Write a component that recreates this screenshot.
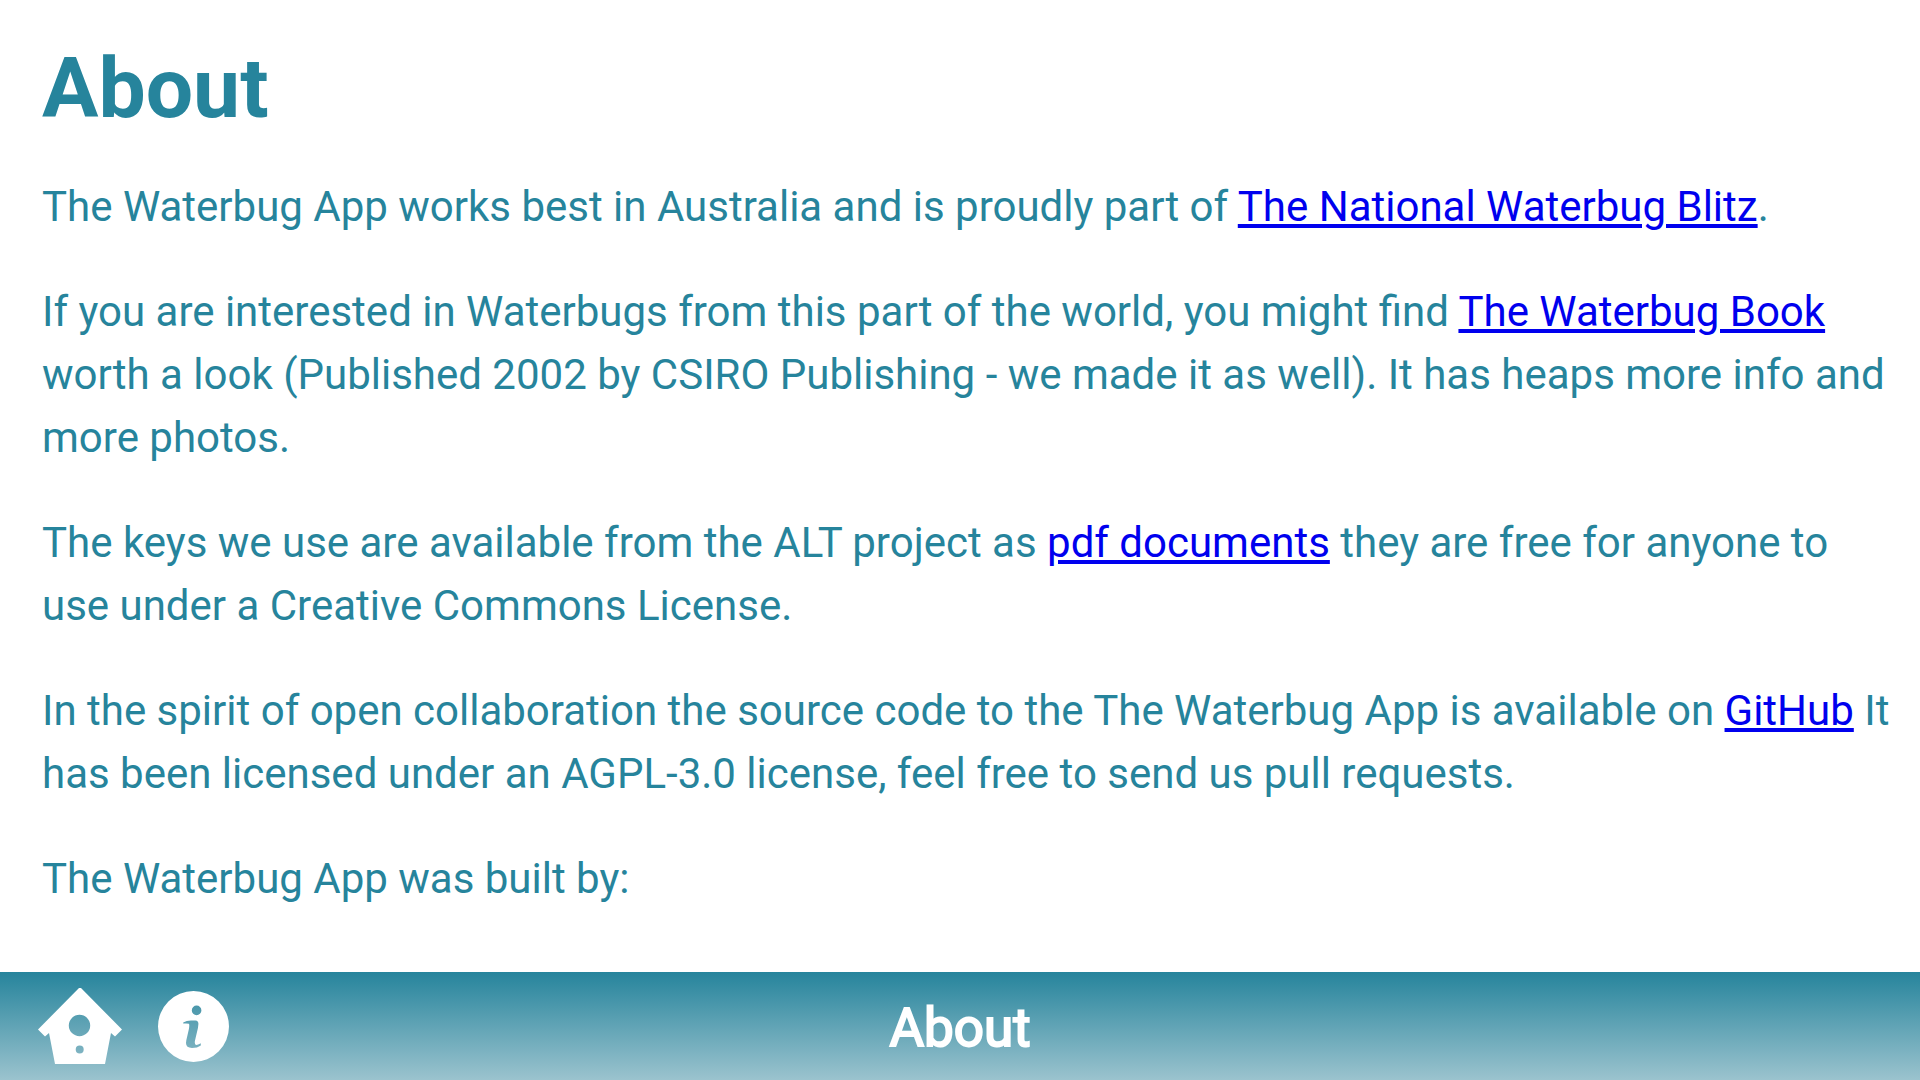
<main>
  <article>
    <h1>About</h1>
    <p>The Waterbug App works best in Australia and is proudly part of <a href="#blitz">The National Waterbug Blitz</a>.</p>
    <p>If you are interested in Waterbugs from this part of the world, you might find <a href="#book">The Waterbug Book</a> worth a look (Published 2002 by CSIRO Publishing - we made it as well). It has heaps more info and more photos.</p>
    <p>The keys we use are available from the ALT project as <a href="#keys">pdf documents</a> they are free for anyone to use under a Creative Commons License.</p>
    <p>In the spirit of open collaboration the source code to the The Waterbug App is available on <a href="#github">GitHub</a> It has been licensed under an AGPL-3.0 license, feel free to send us pull requests.</p>
    <p>The Waterbug App was built by:</p>
  </article>
  <footer>
    <nav>
      <button aria-label="Home"><svg viewBox="0 0 84 76" width="84" height="76"><path fill="#fff" fill-rule="evenodd" d="M41 0h2L84 41.5 77 48.5 73 45 67 76H17L11 45 7 48.5 0 41.5ZM41.5 26.8a10.7 10.7 0 1 0 0 21.4a10.7 10.7 0 1 0 0-21.4ZM41.7 57.5a4 4 0 1 0 0 8a4 4 0 1 0 0-8Z"/></svg></button>
      <button aria-label="Information"><svg viewBox="0 0 71 71" width="71" height="71"><path fill="#fff" fill-rule="evenodd" d="M35.5 0a35.5 35.5 0 1 0 0 71a35.5 35.5 0 1 0 0-71ZM38.6 14.6a4.8 4.8 0 1 1 0 9.6a4.8 4.8 0 1 1 0-9.6ZM25.2 31.6Q28.5 29.5 33 29.4H37.5Q40.5 29.6 40.4 33Q40.3 36 39 41L37 49.5Q36.2 53.5 38.2 54Q40 54 42.8 52.2V54.5Q39.5 57 34 57Q28 56.8 28 52Q28.1 49.5 29.3 45L30.8 38.5Q31.8 33.5 30.8 32.8Q29.5 32.2 25.2 32.6Z"/></svg></button>
    </nav>
    <h2>About</h2>
  </footer>
</main>

<style>
  :global(body) { margin: 0; background: #fff; }
  main { height: 100vh; display: flex; flex-direction: column; overflow: hidden; font-family: Roboto, sans-serif; color: #26849c; }
  article { flex: 1; min-height: 0; overflow: hidden; padding: 0 24px 0 42px; font-size: 42px; line-height: 63px; }
  h1 { margin: 57px 0 55px; font-size: 84px; line-height: 63px; font-weight: 700; }
  p { margin: 0 0 42px; }
  a { color: #0000ee; text-decoration-thickness: 4px; text-underline-offset: 3px; }
  footer { height: 108px; flex: none; display: grid; grid-template-columns: 1fr auto 1fr; align-items: center; background: linear-gradient(#26849c, #9bc3ce); }
  nav { display: flex; align-items: center; gap: 36px; padding-left: 38px; }
  button { padding: 0; border: 0; background: none; display: flex; }
  h2 { margin: 0; padding-top: 4px; font-size: 53px; line-height: 63px; font-weight: 400; color: #fff; -webkit-text-stroke: 2px #fff; }
</style>
